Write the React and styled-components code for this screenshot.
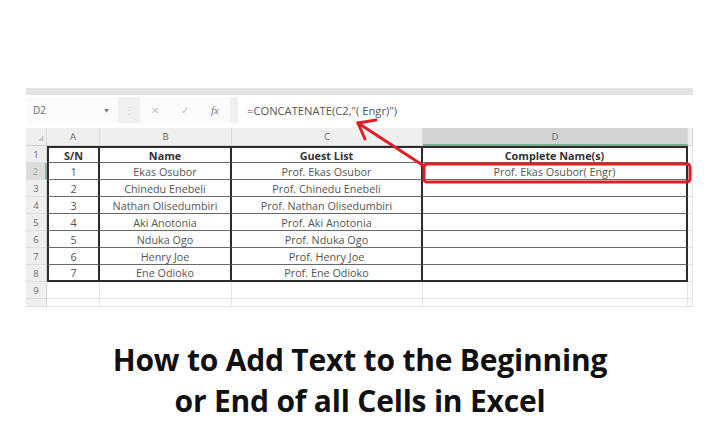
import React from 'react';
import styled, { createGlobalStyle } from 'styled-components';

const GlobalStyle = createGlobalStyle`
  html, body {
    margin: 0;
    padding: 0;
    background: #ffffff;
  }
  body {
    width: 720px;
    height: 430px;
    overflow: hidden;
    font-family: "Open Sans", "Liberation Sans", sans-serif;
  }
`;

const Page = styled.div`
  display: flex;
  flex-direction: column;
  align-items: center;
  width: 720px;
  height: 430px;
  padding-top: 88px;
  box-sizing: border-box;
`;

const Sheet = styled.div`
  position: relative;
  width: 667px;
  align-self: flex-start;
  margin-left: 26px;
  font-family: "Open Sans", "Liberation Sans", sans-serif;
  color: #4a4a4a;
`;

const RibbonStrip = styled.div`
  height: 7px;
  background: #e3e3e3;
`;

const FormulaBar = styled.div`
  display: flex;
  align-items: stretch;
  height: 26px;
  margin-top: 2px;
  background: #f0f0f0;
  font-size: 10px;
`;

const NameBox = styled.div`
  display: flex;
  align-items: center;
  justify-content: space-between;
  width: 92px;
  padding: 0 8px 0 7px;
  box-sizing: border-box;
  background: #fbfbfb;
  color: #6a6a6a;
`;

const Caret = styled.span`
  font-size: 7px;
  color: #777;
`;

const Grip = styled.div`
  display: flex;
  align-items: center;
  justify-content: center;
  width: 22px;
  color: #cfcfcf;
  font-size: 10px;
`;

const ActionBox = styled.div`
  display: flex;
  align-items: center;
  justify-content: space-around;
  width: 90px;
  background: #fbfbfb;
  color: #c4c4c4;
  font-size: 10px;
`;

const FxLabel = styled.span`
  font-family: "Liberation Serif", serif;
  font-style: italic;
  color: #777;
  font-size: 11px;
`;

const FormulaInput = styled.div`
  flex: 1;
  display: flex;
  align-items: center;
  margin-left: 8px;
  padding-left: 9px;
  background: #ffffff;
  color: #555;
  font-size: 11.2px;
`;

const Grid = styled.div`
  display: grid;
  grid-template-columns: 21px 53px 132px 191px 265px 5px;
  grid-template-rows: 18px repeat(9, 17px) 8px;
  margin-top: 5px;
  font-size: 10.8px;
  overflow: hidden;
`;

const ColHead = styled.div`
  display: flex;
  align-items: center;
  justify-content: center;
  background: ${p => (p.$active ? '#d4d4d4' : '#efefef')};
  border-right: 1px solid #d9d9d9;
  border-bottom: ${p => (p.$active ? '2px solid #7fa88e' : '1px solid #d4d4d4')};
  color: #6b6b6b;
  font-size: 9.5px;
`;

const Corner = styled(ColHead)`
  justify-content: flex-end;
  align-items: flex-end;
  padding: 0 3px 3px 0;
  color: #c8c8c8;
  font-size: 7px;
`;

const RowHead = styled.div`
  display: flex;
  align-items: ${p => (p.$cut ? 'flex-start' : 'center')};
  justify-content: center;
  overflow: hidden;
  background: ${p => (p.$active ? '#dcdcdc' : '#efefef')};
  border-right: ${p => (p.$active ? '2px solid #8fb49c' : '1px solid #d4d4d4')};
  border-bottom: 1px solid #dedede;
  color: ${p => (p.$active ? '#8fa897' : '#6b6b6b')};
  font-size: 9.5px;
`;

const Cell = styled.div`
  display: flex;
  align-items: center;
  justify-content: center;
  white-space: nowrap;
  background: #ffffff;
  font-weight: ${p => (p.$bold ? 700 : 400)};
  color: ${p => (p.$bold ? '#333' : '#555')};
  border-right: ${p => (p.$table ? '2px solid #2c2c2c' : '1px solid #e4e4e4')};
  border-bottom: ${p =>
    p.$last ? '2px solid #2c2c2c' : p.$table ? '1px solid #6a6a6a' : '1px solid #e4e4e4'};
  border-left: ${p => (p.$first ? '2px solid #2c2c2c' : 'none')};
  border-top: ${p => (p.$top ? '2px solid #2c2c2c' : 'none')};
`;

const Markup = styled.svg`
  position: absolute;
  left: 0;
  top: 0;
  pointer-events: none;
  overflow: visible;
`;

const Title = styled.h1`
  margin: 32px 0 0;
  font-family: "Open Sans", "Noto Sans", sans-serif;
  font-weight: 700;
  font-size: 30px;
  line-height: 41px;
  color: #111111;
  text-align: center;
  letter-spacing: -0.2px;
`;

const rows = [
  ['S/N', 'Name', 'Guest List', 'Complete Name(s)'],
  ['1', 'Ekas Osubor', 'Prof. Ekas Osubor', 'Prof. Ekas Osubor( Engr)'],
  ['2', 'Chinedu Enebeli', 'Prof. Chinedu Enebeli', ''],
  ['3', 'Nathan Olisedumbiri', 'Prof. Nathan Olisedumbiri', ''],
  ['4', 'Aki Anotonia', 'Prof. Aki Anotonia', ''],
  ['5', 'Nduka Ogo', 'Prof. Nduka Ogo', ''],
  ['6', 'Henry Joe', 'Prof. Henry Joe', ''],
  ['7', 'Ene Odioko', 'Prof. Ene Odioko', ''],
];

const columns = ['A', 'B', 'C', 'D'];

export default function App() {
  return (
    <>
      <GlobalStyle />
      <Page>
        <Sheet>
          <RibbonStrip />
          <FormulaBar>
            <NameBox>
              D2 <Caret>▼</Caret>
            </NameBox>
            <Grip>⋮</Grip>
            <ActionBox>
              <span>✕</span>
              <span>✓</span>
              <FxLabel>fx</FxLabel>
            </ActionBox>
            <FormulaInput>=CONCATENATE(C2,"( Engr)")</FormulaInput>
          </FormulaBar>

          <Grid>
            <Corner>◢</Corner>
            {columns.map(c => (
              <ColHead key={c} $active={c === 'D'}>
                {c}
              </ColHead>
            ))}
            <ColHead />

            {rows.map((row, r) => (
              <React.Fragment key={r}>
                <RowHead $active={r === 1}>{r + 1}</RowHead>
                {row.map((value, c) => (
                  <Cell
                    key={c}
                    $table
                    $bold={r === 0}
                    $first={c === 0}
                    $top={r === 0}
                    $last={r === rows.length - 1}
                  >
                    {value}
                  </Cell>
                ))}
                <Cell />
              </React.Fragment>
            ))}

            <RowHead>9</RowHead>
            {columns.map(c => (
              <Cell key={c} />
            ))}
            <Cell />

            <RowHead $cut />
            {columns.map(c => (
              <Cell key={c} />
            ))}
            <Cell />
          </Grid>

          <Markup width="667" height="230" viewBox="0 0 667 230">
            <g fill="none" stroke="#df1f26" strokeWidth="3" strokeLinecap="round" strokeLinejoin="round">
              <rect x="398" y="76" width="266" height="18" rx="3" />
              <path d="M398 78 L332 35" />
              <path d="M332 35 L350 32" />
              <path d="M332 35 L339 51" />
            </g>
          </Markup>
        </Sheet>

        <Title>
          How to Add Text to the Beginning
          <br />
          or End of all Cells in Excel
        </Title>
      </Page>
    </>
  );
}
